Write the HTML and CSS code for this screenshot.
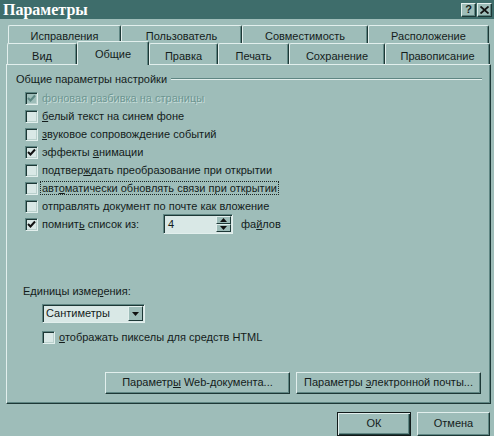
FILE: index.html
```html
<!DOCTYPE html>
<html lang="ru">
<head>
  <meta charset="UTF-8" />
  <title>Параметры</title>
  <link rel="stylesheet" href="styles.css">
</head>
<body>

<div class="window">
  <!-- Заголовок окна -->
  <div class="titlebar">
    <span class="title">Параметры</span>
    <span class="tbtn">?</span>
    <span class="tbtn close">
      <svg width="9" height="8" viewBox="0 0 9 8"><path d="M0.5 0.5 L8.5 7.5 M8.5 0.5 L0.5 7.5" stroke="#111" stroke-width="1.8"/></svg>
    </span>
  </div>

  <!-- Вкладки -->
  <div class="tabs">
    <div class="tabrow back">
      <div class="tab">Исправления</div>
      <div class="tab">Пользователь</div>
      <div class="tab">Совместимость</div>
      <div class="tab">Расположение</div>
    </div>
    <div class="tabrow front">
      <div class="tab">Вид</div>
      <div class="tab active">Общие</div>
      <div class="tab">Правка</div>
      <div class="tab">Печать</div>
      <div class="tab">Сохранение</div>
      <div class="tab">Правописание</div>
    </div>
  </div>

  <div class="panel">
    <div class="group-title">
      <span>Общие параметры настройки</span>
      <div class="etch"></div>
    </div>

    <div class="checks">
      <div class="row disabled">
        <span class="cb dis"><svg width="9" height="9" viewBox="0 0 9 9"><path d="M1 4 L3.5 6.5 L8 1.5" fill="none" stroke="#5d8783" stroke-width="2"/></svg></span>
        <span>фоновая разбивка на страницы</span>
      </div>
      <div class="row">
        <span class="cb"></span>
        <span><u>б</u>елый текст на синем фоне</span>
      </div>
      <div class="row">
        <span class="cb"></span>
        <span><u>з</u>вуковое сопровождение событий</span>
      </div>
      <div class="row">
        <span class="cb"><svg width="9" height="9" viewBox="0 0 9 9"><path d="M1 4 L3.5 6.5 L8 1.5" fill="none" stroke="#111" stroke-width="2"/></svg></span>
        <span>эффекты <u>а</u>нимации</span>
      </div>
      <div class="row">
        <span class="cb"></span>
        <span>подтвер<u>ж</u>дать преобразование при открытии</span>
      </div>
      <div class="row">
        <span class="cb"></span>
        <span class="focus">авт<u>о</u>матически обновлять связи при открытии</span>
      </div>
      <div class="row">
        <span class="cb"></span>
        <span>отправлять <u>д</u>окумент по почте как вложение</span>
      </div>
      <div class="row">
        <span class="cb"><svg width="9" height="9" viewBox="0 0 9 9"><path d="M1 4 L3.5 6.5 L8 1.5" fill="none" stroke="#111" stroke-width="2"/></svg></span>
        <span class="spin-label">помнит<u>ь</u> список из:</span>
        <div class="spin">
          <div class="spin-val">4</div>
          <div class="spin-btns">
            <span class="sbtn"><svg width="7" height="4" viewBox="0 0 7 4"><path d="M3.5 0 L7 4 L0 4 Z" fill="#111"/></svg></span>
            <span class="sbtn"><svg width="7" height="4" viewBox="0 0 7 4"><path d="M0 0 L7 0 L3.5 4 Z" fill="#111"/></svg></span>
          </div>
        </div>
        <span class="files">фа<u>й</u>лов</span>
      </div>
    </div>

    <div class="units-label">Единицы изме<u>р</u>ения:</div>
    <div class="select">
      <span class="select-val">Сантиметры</span>
      <span class="select-btn"><svg width="7" height="4" viewBox="0 0 7 4"><path d="M0 0 L7 0 L3.5 4 Z" fill="#111"/></svg></span>
    </div>
    <div class="row html-row">
      <span class="cb"></span>
      <span><u>о</u>тображать пикселы для средств HTML</span>
    </div>

    <div class="panel-buttons">
      <div class="btn wide">Параметр<u>ы</u> Web-документа...</div>
      <div class="btn wide">Параметры <u>э</u>лектронной почты...</div>
    </div>
  </div>

  <div class="dialog-buttons">
    <div class="btn ok">ОК</div>
    <div class="btn cancel">Отмена</div>
  </div>
</div>

</body>
</html>
```

FILE: styles.css
```css
* {
  box-sizing: border-box;
}
body {
  margin: 0;
  font-family: "Liberation Sans", Arial, sans-serif;
  font-size: 11px;
  color: #141c1b;
}

.window {
  width: 494px;
  height: 436px;
  background: #9ebdb9;
  overflow: hidden;
}

/* заголовок */
.titlebar {
  height: 19px;
  background: #3e6d6b;
  display: flex;
  align-items: center;
  padding: 0 2px 0 3px;
}
.title {
  flex: 1;
  color: #fff;
  font: bold 16px "Liberation Serif", serif;
}
.tbtn {
  width: 15px;
  height: 14px;
  margin-left: 1px;
  background: #9ebdb9;
  border: 1px solid;
  border-color: #e2efed #1d3836 #1d3836 #e2efed;
  box-shadow: inset -1px -1px #5f8683;
  font-weight: bold;
  font-size: 11px;
  line-height: 11px;
  text-align: center;
  display: flex;
  align-items: center;
  justify-content: center;
}

/* вкладки */
.tabs {
  margin-top: 6px;
  padding: 0 3px 0 7px;
}
.tabrow {
  display: flex;
}
.tabrow.back {
  height: 18px;
  margin-left: 1px;
}
.tabrow.front {
  height: 21px;
  position: relative;
  z-index: 1;
}
.tab {
  text-align: center;
  white-space: nowrap;
  border: 1px solid;
  border-bottom: none;
  border-color: #e2efed #1d3836 #e2efed #e2efed;
  border-radius: 2px 2px 0 0;
  box-shadow: inset -1px 0 #5f8683;
  padding-top: 3px;
  line-height: 14px;
}
.tabrow.front .tab {
  padding-top: 4px;
  line-height: 16px;
}
.tabrow.back .tab:nth-child(1) { width: 113px; }
.tabrow.back .tab:nth-child(2) { width: 121px; }
.tabrow.back .tab:nth-child(3) { width: 126px; }
.tabrow.back .tab:nth-child(4) { width: 121px; }

.tabrow.front .tab:nth-child(1) { width: 70px; }
.tabrow.front .tab:nth-child(2) { width: 72px; }
.tabrow.front .tab:nth-child(3) { width: 69px; }
.tabrow.front .tab:nth-child(4) { width: 71px; }
.tabrow.front .tab:nth-child(5) { width: 96px; }
.tabrow.front .tab:nth-child(6) { width: 105px; }

.tabrow.front .tab.active {
  background: #9ebdb9;
  height: 24px;
  margin-top: -2px;
  padding-top: 4px;
}

/* панель */
.panel {
  margin: 0 3px 0 6px;
  height: 340px;
  border: 1px solid;
  border-color: #e2efed #1d3836 #1d3836 #e2efed;
  box-shadow: inset -1px -1px #5f8683;
  padding-left: 9px;
  position: relative;
}

.group-title {
  display: flex;
  align-items: center;
  margin-top: 7px;
  height: 14px;
  padding-right: 8px;
}
.etch {
  flex: 1;
  margin-left: 4px;
  border-top: 1px solid #5f8683;
  border-bottom: 1px solid #e2efed;
}

.checks {
  margin-top: 3px;
  margin-left: 9px;
}
.row {
  height: 18px;
  display: flex;
  align-items: center;
  white-space: nowrap;
}
.row.disabled {
  color: #6d9692;
  text-shadow: 1px 1px #c9ddda;
}

.cb {
  width: 13px;
  height: 13px;
  margin-right: 4px;
  flex-shrink: 0;
  background: #d9e8e6;
  border: 1px solid;
  border-color: #5f8683 #e2efed #e2efed #5f8683;
  box-shadow: inset 1px 1px #1d3836, inset -1px -1px #b9d0cc;
  display: flex;
  align-items: center;
  justify-content: center;
}
.cb.dis {
  background: #9ebdb9;
}

.focus {
  outline: 1px dotted #1d2827;
  outline-offset: 0;
  padding: 0 1px;
  margin-left: -1px;
}

.spin-label {
  width: 121px;
}
.spin {
  display: flex;
  width: 70px;
  height: 20px;
  border: 1px solid;
  border-color: #5f8683 #e2efed #e2efed #5f8683;
  box-shadow: inset 1px 1px #1d3836;
  background: #d9e8e6;
}
.spin-val {
  flex: 1;
  padding: 3px 0 0 4px;
}
.spin-btns {
  width: 16px;
  display: flex;
  flex-direction: column;
  padding: 1px 1px 1px 0;
}
.sbtn {
  flex: 1;
  background: #9ebdb9;
  border: 1px solid;
  border-color: #e2efed #1d3836 #1d3836 #e2efed;
  display: flex;
  align-items: center;
  justify-content: center;
}
.files {
  margin-left: 8px;
}

.units-label {
  margin-top: 52px;
  margin-left: 7px;
  height: 14px;
}
.select {
  margin: 5px 0 0 26px;
  width: 103px;
  height: 19px;
  display: flex;
  border: 1px solid;
  border-color: #5f8683 #e2efed #e2efed #5f8683;
  box-shadow: inset 1px 1px #1d3836;
  background: #d9e8e6;
  padding: 1px 1px 1px 2px;
}
.select-val {
  flex: 1;
  line-height: 15px;
  padding-left: 1px;
}
.select-btn {
  width: 15px;
  background: #9ebdb9;
  border: 1px solid;
  border-color: #e2efed #1d3836 #1d3836 #e2efed;
  display: flex;
  align-items: center;
  justify-content: center;
}
.html-row {
  margin: 5px 0 0 26px;
}

.btn {
  height: 22px;
  text-align: center;
  white-space: nowrap;
  line-height: 19px;
  border: 1px solid;
  border-color: #e2efed #1d3836 #1d3836 #e2efed;
  box-shadow: inset -1px -1px #5f8683;
}

.panel-buttons {
  display: flex;
  gap: 6px;
  margin: 26px 0 0 89px;
}
.btn.wide {
  width: 185px;
}

.dialog-buttons {
  display: flex;
  justify-content: flex-end;
  gap: 6px;
  margin-top: 8px;
  padding-right: 4px;
}
.btn.ok {
  width: 74px;
  height: 24px;
  border: 1px solid #111a19;
  box-shadow: inset 1px 1px #e2efed, inset -1px -1px #1d3836, inset -2px -2px #5f8683;
  line-height: 21px;
}
.btn.cancel {
  width: 73px;
  height: 24px;
  line-height: 21px;
}
```
